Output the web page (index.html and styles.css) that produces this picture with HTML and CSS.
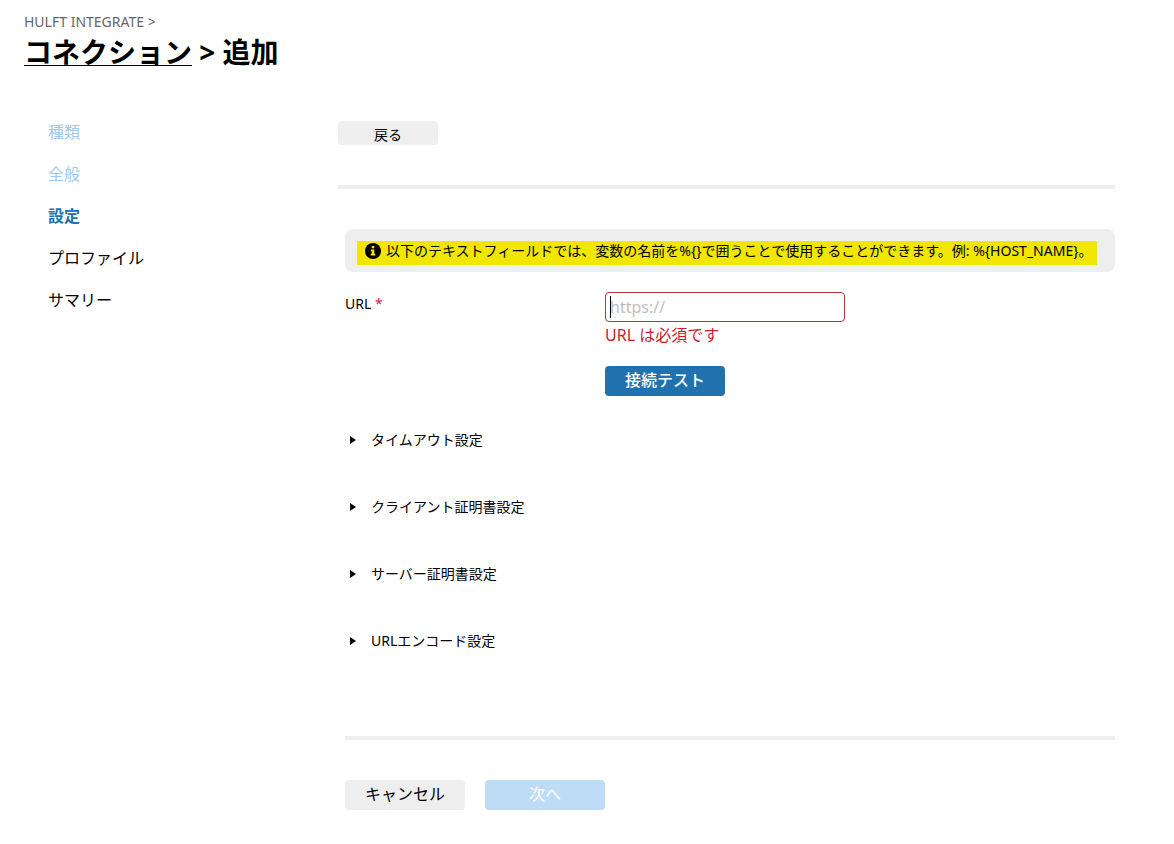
FILE: index.html
```html
<!DOCTYPE html>
<html lang="ja">
<head>
<meta charset="utf-8">
<title>コネクション &gt; 追加</title>
<link rel="stylesheet" href="styles.css">
</head>
<body>
<header class="header">
  <p class="crumb">HULFT INTEGRATE &gt;</p>
  <h1 class="title"><a class="title-link" href="#">コネクション</a> &gt; 追加</h1>
</header>
<div class="layout">
  <nav class="steps">
    <ol class="step-list">
      <li class="step step-done">種類</li>
      <li class="step step-done">全般</li>
      <li class="step step-current" aria-current="step">設定</li>
      <li class="step">プロファイル</li>
      <li class="step">サマリー</li>
    </ol>
  </nav>
  <main class="main">
    <div class="toolbar"><button class="btn btn-small" type="button">戻る</button></div>
    <form class="form">
      <div class="note">
        <p class="note-mark">
          <svg class="note-icon" viewBox="0 0 16 16" aria-hidden="true">
            <circle cx="8" cy="8" r="8" fill="#000"/>
            <path d="M6.700 3h2.600v2.300H6.700zM6 6.500h3.300v4.300h1V12.500H5.700v-1.700h1V8.200H6z" fill="#f0e600"/>
          </svg>
          <span class="note-text">以下のテキストフィールドでは、変数の名前を%{}で囲うことで使用することができます。例: %{HOST_NAME}。</span>
        </p>
      </div>
      <div class="field">
        <label class="label" for="url">URL <span class="required">*</span></label>
        <div class="control">
          <input class="input" id="url" type="text" placeholder="https://" aria-describedby="url-error">
          <p class="error" id="url-error">URL は必須です</p>
          <button class="btn btn-primary" type="button">接続テスト</button>
        </div>
      </div>
      <div class="sections">
        <details class="section"><summary class="summary">タイムアウト設定</summary></details>
        <details class="section"><summary class="summary">クライアント証明書設定</summary></details>
        <details class="section"><summary class="summary">サーバー証明書設定</summary></details>
        <details class="section"><summary class="summary">URLエンコード設定</summary></details>
      </div>
      <div class="actions">
        <button class="btn" type="button">キャンセル</button>
        <button class="btn btn-next" type="button" disabled>次へ</button>
      </div>
    </form>
  </main>
</div>
</body>
</html>
```

FILE: styles.css
```css
* { box-sizing: border-box; }

body {
  margin: 0;
  background: #fff;
  color: #000;
  font: 16px/24px "Noto Sans", "Noto Sans CJK JP", sans-serif;
}

p, h1, ol { margin: 0; padding: 0; }

.header { padding: 12px 24px 0; }
.crumb { color: #666; font-size: 14px; line-height: 20px; }
.title { font-size: 28px; line-height: 40px; font-weight: 700; }
.title-link {
  display: inline-block;
  color: inherit;
  text-decoration: none;
  line-height: 26px;
  border-bottom: 1px solid #000;
}

.layout {
  display: grid;
  grid-template-columns: 290px minmax(0, 1fr);
  padding: 48px 59px 34px 48px;
}

.step-list { display: grid; gap: 18px; list-style: none; }
.step-done { color: #a0c8eb; }
.step-current { color: #2072af; font-weight: 700; }

.main { padding-top: 1px; }
.toolbar { padding-bottom: 40px; border-bottom: 4px solid #eee; display: flex; }
.form { padding: 40px 0 0 7px; }

.btn {
  width: 120px;
  height: 30px;
  padding: 0 0 2px;
  border: 0;
  border-radius: 4px;
  background: #eee;
  color: #000;
  font: inherit;
}
.btn-small { width: 100px; height: 24px; padding: 2px 0 0; font-size: 14px; }
.btn-primary { background: #2072af; color: #fff; font-weight: 500; }
.btn-next { background: #bedcf5; color: #fff; }

.note { padding: 12px 12px 7px; border-radius: 8px; background: #eee; }
.note-mark {
  display: flex;
  align-items: flex-start;
  gap: 5px;
  width: fit-content;
  padding: 0 5px 4px 8px;
  background: #f0e600;
  font-size: 14px;
  line-height: 20px;
}
.note-icon { flex: none; width: 16px; height: 16px; margin-top: 2px; }

.field { display: grid; grid-template-columns: 260px minmax(0, 1fr); margin-top: 20px; }
.label { font-size: 14px; }
.required { color: #c81e32; }
.control { display: flex; flex-direction: column; align-items: flex-start; }
.input {
  width: 240px;
  height: 30px;
  padding: 0 4px 1px;
  border: 1px solid #b93040;
  border-radius: 4px;
  background: linear-gradient(#000, #000) 4px 3px / 1px 22px no-repeat #fff;
  font: inherit;
}
.input::placeholder { color: #bebebe; opacity: 1; }
.error { margin: 1px 0 19px; color: #c81e32; }

.sections {
  display: grid;
  gap: 43px;
  margin-top: 32px;
  padding-bottom: 83px;
  border-bottom: 4px solid #eee;
}
.summary {
  display: flex;
  align-items: center;
  gap: 15px;
  padding-left: 5px;
  font-size: 14px;
  list-style: none;
}
.summary::before {
  content: "";
  border: solid transparent;
  border-width: 4px 0 4px 6px;
  border-left-color: #000;
}

.actions { display: flex; gap: 20px; margin-top: 40px; }
```
